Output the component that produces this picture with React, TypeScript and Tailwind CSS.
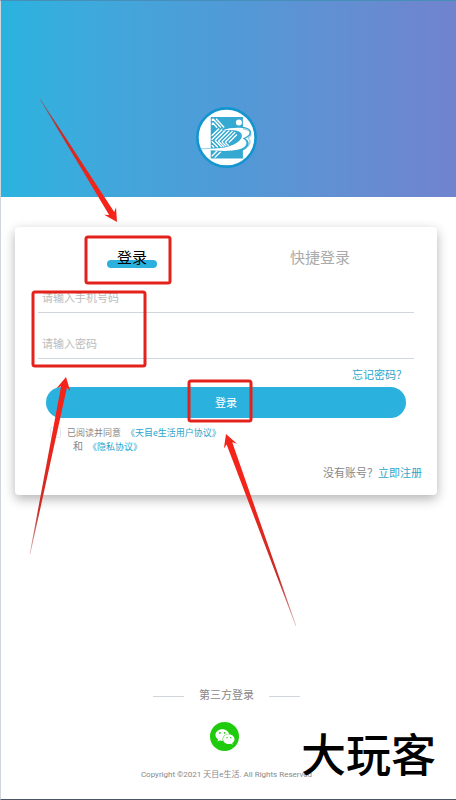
import {useState} from "react";
import {FaWeixin} from "react-icons/fa";

interface ArrowProps {
    id: string;
    from: [number, number];
    to: [number, number];
}

const Logo = () => (
    <svg viewBox="50 36 182 182" className="size-[61px]" role="img" aria-label="天目e生活">
        <circle cx="141" cy="127" r="87" fill="#fff" stroke="#1395cf" strokeWidth="8"/>
        <path d="M94 66H190V190H94Z" fill="#35a9d1"/>
        <circle cx="178" cy="82" r="9" fill="#fff"/>
        <g fill="none" stroke="#fff" strokeWidth="4" strokeLinejoin="round">
            <path d="M97 76L101 72L124 97M97 88L101 84L113 98M110 71L134 97"/>
            <path d="M97 122L119 100M97 134L130 101M107 136L139 104M117 138L149 106M127 140L159 108M137 141L167 111M148 142L172 118"/>
            <path d="M97 138L115 156M97 150L104 157M107 136L127 156M117 138L134 155M127 140L141 154M137 141L148 152"/>
            <path d="M97 183L114 166M106 187L126 167"/>
        </g>
        <path d="M128 102C165 90 205 93 213 106C219 121 204 126 197 130C216 140 208 160 180 169C156 176 123 170 105 165L64 162L66 159C134 161 169 150 184 130C194 110 176 100 128 106Z" fill="#35a9d1"/>
        <path d="M128 105C158 95 202 95 209 107C214 120 199 125 189 130C207 137 205 156 177 163C155 168 126 169 66 163V160C134 163 171 151 185 130C194 111 174 101 128 106Z" fill="#fff"/>
        <path d="M190 101C215 105 221 122 205 129C222 141 203 165 170 172" fill="none" stroke="#35a9d1" strokeWidth="2"/>
    </svg>
);

// tapered arrow, fades in from the thin end
const Arrow = ({id, from, to}: ArrowProps) => {
    const length = Math.hypot(to[0] - from[0], to[1] - from[1]);
    const angle = Math.atan2(to[1] - from[1], to[0] - from[0]) * 180 / Math.PI;

    return (
        <g transform={`translate(${from[0]} ${from[1]}) rotate(${angle})`}>
            <defs>
                <linearGradient id={id} gradientUnits="userSpaceOnUse" x1="0" y1="0" x2={length} y2="0">
                    <stop offset="0" stopColor="#a8332f" stopOpacity="0.4"/>
                    <stop offset="0.25" stopColor="#c92c26"/>
                    <stop offset="0.75" stopColor="#f5241a"/>
                </linearGradient>
            </defs>
            <path
                d={`M0 -0.3L${length - 10} -3L${length - 13} -7L${length} 0L${length - 13} 7L${length - 10} 3L0 0.3Z`}
                fill={`url(#${id})`}
            />
        </g>
    );
};

const Annotations = () => (
    <svg width="456" height="800" viewBox="1 1 456 800" className="absolute top-0 left-0 pointer-events-none" aria-hidden="true">
        <g fill="none" stroke="#e3231b" strokeWidth="3">
            <rect x="86" y="237" width="84" height="46" rx="2"/>
            <rect x="33" y="292" width="112" height="74" rx="2"/>
            <rect x="189" y="381" width="62" height="40" rx="2"/>
        </g>
        <Arrow id="arrow-tab" from={[40, 99]} to={[117, 222]}/>
        <Arrow id="arrow-fields" from={[30, 554]} to={[66, 377]}/>
        <Arrow id="arrow-submit" from={[296, 626]} to={[226, 434]}/>
    </svg>
);

const App = () => {
    const [tab, setTab] = useState("password");
    const [agreed, setAgreed] = useState(false);

    const tabs = [
        {key: "password", label: "登录"},
        {key: "quick", label: "快捷登录"},
    ];

    return (
        <div className="relative min-h-screen flex flex-col bg-white border-l border-t border-b border-l-gray-300 border-t-[#458fb8] border-b-gray-600 overflow-hidden font-['Roboto','Noto_Sans_CJK_SC',sans-serif]">
            <header className="h-[196px] pt-[106px] pr-1 flex justify-center items-start bg-linear-to-r from-[#29b3df] via-[#509ad7] to-[#7083ce]">
                <Logo/>
            </header>

            <main className="mt-[30px] ml-[14px] mr-[19px] h-[268px] px-[23px] bg-white rounded-sm shadow-[0_4px_12px_rgba(0,0,0,0.3)]">
                <div className="grid grid-cols-2 h-[62px] pt-5 items-start" role="tablist">
                    {tabs.map((item) => (
                        <button
                            key={item.key}
                            type="button"
                            role="tab"
                            aria-selected={tab === item.key}
                            onClick={() => setTab(item.key)}
                            className={`justify-self-center relative text-[15px] leading-[22px] ${tab === item.key ? "text-black" : "text-[#aaaaaa]"}`}
                        >
                            {tab === item.key && <span className="absolute -inset-x-[10px] bottom-px h-2 rounded-full bg-[#2cb1de]"/>}
                            <span className="relative">{item.label}</span>
                        </button>
                    ))}
                </div>

                <form onSubmit={(e) => e.preventDefault()}>
                    <input
                        type="tel"
                        aria-label="手机号码"
                        placeholder="请输入手机号码"
                        className="block w-full h-6 px-1 pb-1 text-[11px] border-b border-gray-300 outline-none placeholder:text-[#bbbbbb]"
                    />
                    <input
                        type="password"
                        aria-label="密码"
                        placeholder="请输入密码"
                        className="block w-full h-[46px] px-1 pt-[18px] text-[11px] border-b border-gray-300 outline-none placeholder:text-[#bbbbbb]"
                    />
                    <div className="flex justify-end pt-[9px] pr-[7px] text-[11px] leading-4">
                        <a href="#forgot" className="text-[#2ba5cc]">忘记密码？</a>
                    </div>
                    <div className="px-2 pt-[3px]">
                        <button type="submit" className="block w-full h-[31px] pt-[3px] rounded-full bg-[#2bb1de] text-white text-[11px]">登录</button>
                    </div>
                    <div className="flex items-start pt-2 pl-3 text-[9px] leading-[14px] text-[#888888]">
                        <input
                            id="agree"
                            type="checkbox"
                            checked={agreed}
                            onChange={(e) => setAgreed(e.target.checked)}
                            className="appearance-none size-[11px] mt-px mr-[6px] border border-gray-200 rounded-xs checked:bg-[#2bb1de]"
                        />
                        <div>
                            <label htmlFor="agree">已阅读并同意</label>
                            <a href="#terms" className="ml-[5px] text-[#2ba5cc]">《天目e生活用户协议》</a>
                            <p className="pl-[6px]">
                                <span className="text-[10px]">和</span>
                                <a href="#privacy" className="ml-[5px] text-[#2ba5cc]">《隐私协议》</a>
                            </p>
                        </div>
                    </div>
                </form>

                <p className="pt-3 -mr-2 text-right text-[11px] leading-4 text-[#888888]">
                    没有账号？<a href="#register" className="text-[#2ba5cc]">立即注册</a>
                </p>
            </main>

            <footer className="mt-auto pb-[18px] pr-1 flex flex-col items-center text-[#888888]">
                <div className="flex items-center gap-[15px] text-[11px] leading-4">
                    <span className="w-[31px] h-px bg-gray-300"/>
                    <span>第三方登录</span>
                    <span className="w-[31px] h-px bg-gray-300"/>
                </div>
                <button type="button" aria-label="微信登录" className="mt-[18px] mr-1 size-[29px] rounded-full bg-[#1fcb0c] text-white flex items-center justify-center">
                    <FaWeixin size={20}/>
                </button>
                <p className="mt-[18px] text-[8px] leading-3 whitespace-nowrap">Copyright ©2021 天目e生活. All Rights Reserved</p>
            </footer>

            <Annotations/>
            <p className="absolute right-5 bottom-[14px] text-[45px] leading-[56px] font-medium text-black">大玩客</p>
        </div>
    );
};

export default App;
